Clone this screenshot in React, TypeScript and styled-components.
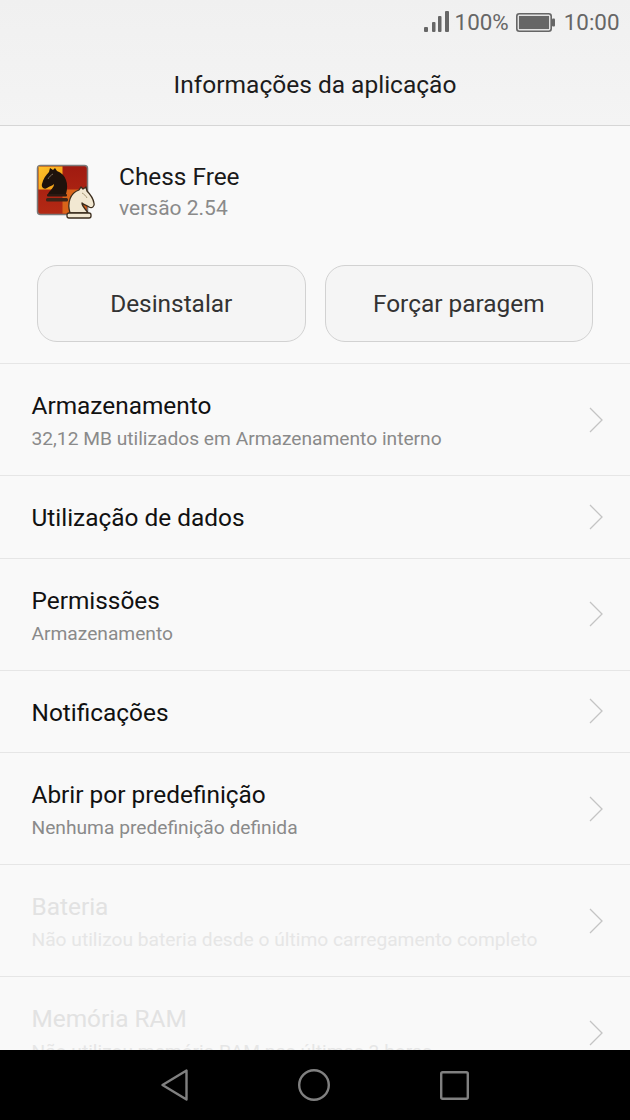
import React from 'react'
import styled, { createGlobalStyle } from 'styled-components'

const GlobalStyle = createGlobalStyle`
  html, body {
    margin: 0;
    padding: 0;
    background: #000;
  }
  * {
    box-sizing: border-box;
  }
`

const Screen = styled.div`
  width: 630px;
  height: 1120px;
  display: flex;
  flex-direction: column;
  overflow: hidden;
  background: #f9f9f9;
  font-family: Roboto, "Liberation Sans", sans-serif;
`

const TopArea = styled.header`
  height: 126px;
  flex: none;
  background: linear-gradient(#f0f0f0, #f4f4f4);
  border-bottom: 1px solid #d6d6d6;
`

const StatusBar = styled.div`
  height: 44px;
  display: flex;
  align-items: center;
  justify-content: flex-end;
  padding-right: 10.5px;
  color: #666;
  font-size: 22.4px;
`

const Percent = styled.span`
  margin-left: 6px;
`

const Clock = styled.span`
  margin-left: 9px;
`

const BatteryIcon = styled.svg`
  margin-left: 7px;
`

const Title = styled.h1`
  margin: 0;
  height: 82px;
  display: flex;
  align-items: center;
  justify-content: center;
  padding-bottom: 2px;
  font-size: 24.5px;
  font-weight: 400;
  color: #1c1c1c;
`

const Content = styled.main`
  flex: 1;
  min-height: 0;
  overflow: hidden;
`

const AppHeader = styled.section`
  height: 238px;
  border-bottom: 1px solid #e6e6e6;
  padding: 34px 37px 0 36px;
`

const AppInfo = styled.div`
  display: flex;
  align-items: center;
  gap: 21px;
  height: 62px;
`

const AppText = styled.div`
  padding-top: 2px;
`

const AppName = styled.div`
  font-size: 24.4px;
  line-height: 32px;
  color: #1a1a1a;
`

const AppVersion = styled.div`
  font-size: 21px;
  line-height: 30px;
  color: #8a8a8a;
`

const Actions = styled.div`
  display: flex;
  gap: 19px;
  margin-top: 43px;
  padding-left: 1px;
`

const ActionButton = styled.button`
  width: 268.5px;
  height: 77px;
  border: 1px solid #d2d2d2;
  border-radius: 20px;
  background: #f5f5f5;
  font-family: inherit;
  font-size: 24.4px;
  color: #333;
`

const Row = styled.div<{ $tall: boolean }>`
  height: ${p => (p.$tall ? 112 : 82.5)}px;
  display: flex;
  align-items: center;
  justify-content: space-between;
  padding: 0 27px 0 31.5px;
  border-bottom: 1px solid #e6e6e6;
`

const RowText = styled.div`
  min-width: 0;
  margin-top: 3px;
`

const RowTitle = styled.div<{ $disabled: boolean }>`
  font-size: 24.4px;
  line-height: 32px;
  color: ${p => (p.$disabled ? '#e2e2e2' : '#111')};
`

const RowSub = styled.div<{ $disabled: boolean }>`
  margin-top: 4px;
  font-size: 19.2px;
  line-height: 26px;
  white-space: nowrap;
  color: ${p => (p.$disabled ? '#e6e6e6' : '#8a8a8a')};
`

const NavBar = styled.nav`
  height: 70px;
  flex: none;
  background: #000;
  display: flex;
  align-items: center;
  justify-content: center;
  gap: 110px;
`

const rows = [
  { title: 'Armazenamento', sub: '32,12 MB utilizados em Armazenamento interno' },
  { title: 'Utilização de dados' },
  { title: 'Permissões', sub: 'Armazenamento' },
  { title: 'Notificações' },
  { title: 'Abrir por predefinição', sub: 'Nenhuma predefinição definida' },
  { title: 'Bateria', sub: 'Não utilizou bateria desde o último carregamento completo', disabled: true },
  { title: 'Memória RAM', sub: 'Não utilizou memória RAM nas últimas 3 horas', disabled: true },
]

const SignalIcon = () => (
  <svg width="25" height="22" viewBox="0 0 25 22">
    <rect x="0" y="16" width="4" height="5" rx="1" fill="#666" />
    <rect x="8" y="11" width="3.5" height="10" rx="1" fill="#666" />
    <rect x="14" y="5" width="3.5" height="16" rx="1" fill="#666" />
    <rect x="21" y="0" width="4" height="21" rx="1" fill="#666" />
  </svg>
)

const Battery = () => (
  <BatteryIcon width="39" height="19" viewBox="0 0 39 19">
    <rect x="0.8" y="0.8" width="34.4" height="17.4" rx="2.5" fill="#e2e2e2" stroke="#666" strokeWidth="1.6" />
    <rect x="3" y="3" width="30" height="13" fill="#666" />
    <rect x="36" y="5.5" width="3" height="8" rx="1" fill="#666" />
  </BatteryIcon>
)

// knight facing left, drawn in a 26x27 box
const knight = 'M24 26 C27 16 24 6 15 3 L13 0 L11 2 L8 0 L7 4 C4 7 1 11 0 16 C-1 19 2 22 5 20 C8 18 10 18 12 16 C12 20 8 22 6 26 Z'

const ChessIcon = () => (
  <svg width="62" height="62" viewBox="0 0 62 62">
    <defs>
      <linearGradient id="orangeSquare" x1="0" y1="0" x2="1" y2="1">
        <stop offset="0" stopColor="#ffc22a" />
        <stop offset="1" stopColor="#f29a14" />
      </linearGradient>
      <linearGradient id="redBoard" x1="0" y1="0" x2="0" y2="1">
        <stop offset="0" stopColor="#a01a10" />
        <stop offset="1" stopColor="#b42a14" />
      </linearGradient>
    </defs>
    <rect x="1.5" y="5.5" width="50" height="49" rx="3" fill="url(#redBoard)" stroke="#7a7a7a" strokeWidth="1.5" />
    <rect x="2.5" y="6.5" width="24" height="23" fill="url(#orangeSquare)" />
    <rect x="26.5" y="29.5" width="24" height="24" fill="#d9641a" />
    <g transform="translate(6 8)">
      <path d={knight} fill="#1e120c" />
      <path d="M11 6 C9 7 7 9 6 11" fill="none" stroke="#7a6a5a" strokeWidth="1" />
      <rect x="5" y="26" width="20" height="2.5" rx="1" fill="#2a1a12" />
      <rect x="4" y="30" width="22" height="3.5" rx="1.5" fill="#3a2418" />
    </g>
    <g transform="translate(58 27) scale(-1 1)">
      <path d={knight} fill="#f2e8d2" stroke="#3a2c1c" strokeWidth="1.3" strokeLinejoin="round" />
      <path d="M12 6 C10 7 8 9 7 11" fill="none" stroke="#a89878" strokeWidth="1" />
      <rect x="3" y="26" width="24" height="5" rx="2" fill="#f2e8d2" stroke="#3a2c1c" strokeWidth="1.3" />
    </g>
  </svg>
)

const Chevron = () => (
  <svg width="14" height="26" viewBox="0 0 14 26">
    <path d="M1 1 L13 13 L1 25" fill="none" stroke="#c4c4c4" strokeWidth="1.3" />
  </svg>
)

const BackIcon = () => (
  <svg width="27" height="32" viewBox="0 0 27 32">
    <path d="M25.5 1.5 L25.5 30.5 L1.5 16 Z" fill="none" stroke="#808080" strokeWidth="2.4" strokeLinejoin="round" />
  </svg>
)

const HomeIcon = () => (
  <svg width="32" height="32" viewBox="0 0 32 32">
    <circle cx="16" cy="16" r="14.8" fill="none" stroke="#808080" strokeWidth="2.4" />
  </svg>
)

const RecentIcon = () => (
  <svg width="29" height="29" viewBox="0 0 29 29">
    <rect x="1.2" y="1.2" width="26.6" height="26.6" rx="1.5" fill="none" stroke="#808080" strokeWidth="2.4" />
  </svg>
)

export default function App() {
  return (
    <Screen>
      <GlobalStyle />
      <TopArea>
        <StatusBar>
          <SignalIcon />
          <Percent>100%</Percent>
          <Battery />
          <Clock>10:00</Clock>
        </StatusBar>
        <Title>Informações da aplicação</Title>
      </TopArea>
      <Content>
        <AppHeader>
          <AppInfo>
            <ChessIcon />
            <AppText>
              <AppName>Chess Free</AppName>
              <AppVersion>versão 2.54</AppVersion>
            </AppText>
          </AppInfo>
          <Actions>
            <ActionButton>Desinstalar</ActionButton>
            <ActionButton>Forçar paragem</ActionButton>
          </Actions>
        </AppHeader>
        {rows.map(row => (
          <Row key={row.title} $tall={!!row.sub}>
            <RowText>
              <RowTitle $disabled={!!row.disabled}>{row.title}</RowTitle>
              {row.sub ? <RowSub $disabled={!!row.disabled}>{row.sub}</RowSub> : null}
            </RowText>
            <Chevron />
          </Row>
        ))}
      </Content>
      <NavBar>
        <BackIcon />
        <HomeIcon />
        <RecentIcon />
      </NavBar>
    </Screen>
  )
}
